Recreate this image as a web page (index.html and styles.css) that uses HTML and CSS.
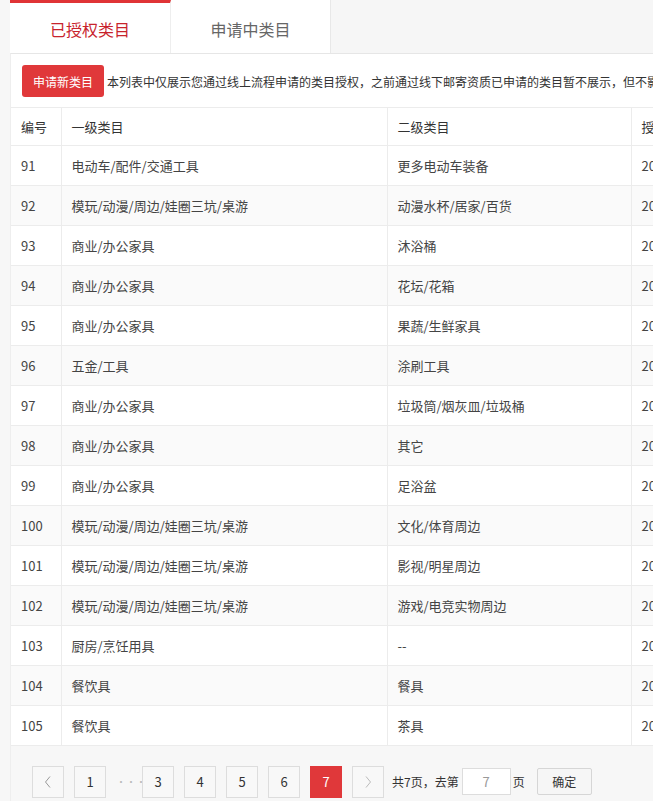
FILE: index.html
```html
<!DOCTYPE html>
<html lang="zh-CN">
<head>
<meta charset="utf-8">
<title>已授权类目</title>
<link rel="stylesheet" href="styles.css">
</head>
<body>
<div class="page">
  <div class="tabs">
    <div class="tab active">已授权类目</div>
    <div class="tab">申请中类目</div>
  </div>
  <div class="panel">
    <div class="toolbar">
      <button class="btn-apply">申请新类目</button>
      <span class="tip">本列表中仅展示您通过线上流程申请的类目授权，之前通过线下邮寄资质已申请的类目暂不展示，但不影响您正常发布商品。</span>
    </div>
    <table class="grid">
      <colgroup>
        <col class="c1"><col class="c2"><col class="c3"><col class="c4"><col class="c5">
      </colgroup>
      <thead>
        <tr><th>编号</th><th>一级类目</th><th>二级类目</th><th>授权时间</th><th>操作</th></tr>
      </thead>
      <tbody>
        <tr><td>91</td><td>电动车/配件/交通工具</td><td>更多电动车装备</td><td>2020-03-12 10:21:06</td><td>--</td></tr>
        <tr><td>92</td><td>模玩/动漫/周边/娃圈三坑/桌游</td><td>动漫水杯/居家/百货</td><td>2020-03-12 10:21:06</td><td>--</td></tr>
        <tr><td>93</td><td>商业/办公家具</td><td>沐浴桶</td><td>2020-03-12 10:21:06</td><td>--</td></tr>
        <tr><td>94</td><td>商业/办公家具</td><td>花坛/花箱</td><td>2020-03-12 10:21:06</td><td>--</td></tr>
        <tr><td>95</td><td>商业/办公家具</td><td>果蔬/生鲜家具</td><td>2020-03-12 10:21:06</td><td>--</td></tr>
        <tr><td>96</td><td>五金/工具</td><td>涂刷工具</td><td>2020-03-12 10:21:06</td><td>--</td></tr>
        <tr><td>97</td><td>商业/办公家具</td><td>垃圾筒/烟灰皿/垃圾桶</td><td>2020-03-12 10:21:06</td><td>--</td></tr>
        <tr><td>98</td><td>商业/办公家具</td><td>其它</td><td>2020-03-12 10:21:06</td><td>--</td></tr>
        <tr><td>99</td><td>商业/办公家具</td><td>足浴盆</td><td>2020-03-12 10:21:06</td><td>--</td></tr>
        <tr><td>100</td><td>模玩/动漫/周边/娃圈三坑/桌游</td><td>文化/体育周边</td><td>2020-03-12 10:21:06</td><td>--</td></tr>
        <tr><td>101</td><td>模玩/动漫/周边/娃圈三坑/桌游</td><td>影视/明星周边</td><td>2020-03-12 10:21:06</td><td>--</td></tr>
        <tr><td>102</td><td>模玩/动漫/周边/娃圈三坑/桌游</td><td>游戏/电竞实物周边</td><td>2020-03-12 10:21:06</td><td>--</td></tr>
        <tr><td>103</td><td>厨房/烹饪用具</td><td>--</td><td>2020-03-12 10:21:06</td><td>--</td></tr>
        <tr><td>104</td><td>餐饮具</td><td>餐具</td><td>2020-03-12 10:21:06</td><td>--</td></tr>
        <tr><td>105</td><td>餐饮具</td><td>茶具</td><td>2020-03-12 10:21:06</td><td>--</td></tr>
      </tbody>
    </table>
    <div class="pager">
      <a class="pg arrow"><svg width="10" height="14" viewBox="0 0 10 14"><path d="M7 1.5 L2.5 7 L7 12.5" fill="none" stroke="#999" stroke-width="1"/></svg></a>
      <a class="pg">1</a>
      <span class="dots">···</span>
      <a class="pg">3</a>
      <a class="pg">4</a>
      <a class="pg">5</a>
      <a class="pg">6</a>
      <a class="pg cur">7</a>
      <a class="pg arrow"><svg width="10" height="14" viewBox="0 0 10 14"><path d="M3 1.5 L7.5 7 L3 12.5" fill="none" stroke="#bbb" stroke-width="1"/></svg></a>
      <span class="total">共7页，去第</span>
      <span class="goto">7</span>
      <span class="unit">页</span>
      <button class="ok">确定</button>
    </div>
  </div>
</div>
</body>
</html>
```
FILE: styles.css
```css
html, body {
  margin: 0;
  padding: 0;
  overflow: hidden;
}
body {
  background: #f7f7f7;
  font-family: "Noto Sans CJK SC", "Microsoft YaHei", sans-serif;
  color: #333;
}
.page {
  width: 1000px;
  padding-left: 10px;
  height: 801px;
}
.tabs {
  display: flex;
  height: 53px;
  background: #f6f6f6;
  border-bottom: 1px solid #e6e6e6;
  border-left: 1px solid #eee;
}
.tab {
  width: 160px;
  box-sizing: border-box;
  background: #fff;
  border-right: 1px solid #e8e8e8;
  color: #666;
  font-size: 16px;
  display: flex;
  align-items: center;
  justify-content: center;
  padding-top: 4px;
}
.tab.active {
  border-top: 3px solid #e03436;
  color: #c8232c;
  padding-top: 1px;
  margin-left: -1px;
  width: 161px;
  border-right: 1px solid #eee;
}
.panel {
  background: #fff;
  border-left: 1px solid #eee;
}
.toolbar {
  height: 53px;
  box-sizing: border-box;
  padding: 11px 11px 10px;
  display: flex;
  align-items: center;
}
.btn-apply {
  width: 82px;
  height: 32px;
  border: none;
  border-radius: 3px;
  background: #e0383a;
  color: #fff;
  font-family: inherit;
  font-size: 12px;
  padding: 0;
  flex: none;
}
.tip {
  margin-left: 3px;
  font-size: 12px;
  color: #333;
  white-space: nowrap;
}
.grid {
  border-collapse: collapse;
  table-layout: fixed;
  width: 880px;
  font-size: 13px;
}
.c1 { width: 50px; }
.c2 { width: 326px; }
.c3 { width: 244px; }
.c4 { width: 160px; }
.c5 { width: 100px; }
.grid th, .grid td {
  text-align: left;
  font-weight: normal;
  padding: 0 10px;
  border: 1px solid #ececec;
  white-space: nowrap;
  overflow: hidden;
}
.grid th:first-child, .grid td:first-child {
  border-left: none;
}
.grid th {
  height: 37px;
  color: #333;
}
.grid td {
  height: 39px;
  color: #444;
}
.grid tbody tr:nth-child(even) td {
  background: #fafafa;
}
.pager {
  background: #f7f7f7;
  height: 56px;
  box-sizing: border-box;
  padding: 15px 0 0 21px;
  display: flex;
  align-items: center;
  font-size: 12px;
}
.pg {
  width: 32px;
  height: 32px;
  box-sizing: border-box;
  border: 1px solid #ddd;
  background: #f8f8f8;
  display: flex;
  align-items: center;
  justify-content: center;
  color: #333;
  margin-right: 10px;
  font-size: 13px;
}
.pg.cur {
  background: #e0383a;
  border-color: #e0383a;
  color: #fff;
}
.dots {
  width: 26px;
  color: #bbb;
  font-size: 10px;
  letter-spacing: 0;
  text-align: left;
  padding-left: 0;
  box-sizing: border-box;
}
.total {
  margin-left: -2px;
  color: #333;
}
.goto {
  width: 49px;
  height: 27px;
  box-sizing: border-box;
  border: 1px solid #ddd;
  background: #fff;
  color: #999;
  display: flex;
  align-items: center;
  justify-content: center;
  margin-left: 3px;
  font-size: 13px;
}
.unit {
  margin-left: 2px;
}
.ok {
  margin-left: 12px;
  width: 55px;
  height: 27px;
  border: 1px solid #d6d6d6;
  border-radius: 2px;
  background: #f6f6f6;
  font-family: inherit;
  font-size: 12px;
  color: #333;
  padding: 0;
}
```
